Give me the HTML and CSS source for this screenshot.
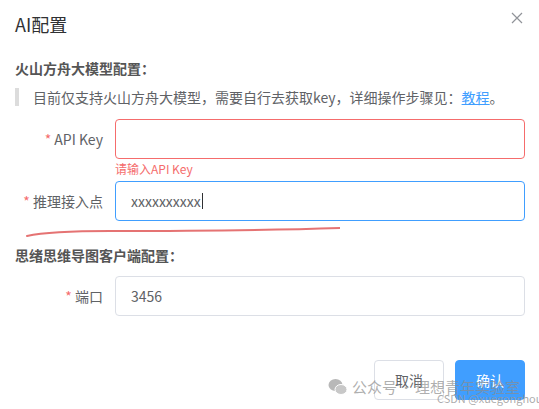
FILE: index.html
```html
<!DOCTYPE html>
<html lang="zh-CN">
<head>
<meta charset="utf-8">
<title>AI配置</title>
<link rel="stylesheet" href="styles.css">
</head>
<body>
<div class="dialog">
  <div class="header">
    <span class="title">AI配置</span>
    <button class="close" aria-label="关闭">
      <svg width="12" height="12" viewBox="0 0 12 12"><path d="M1 1L11 11M11 1L1 11" stroke="#909399" stroke-width="1.2" fill="none"/></svg>
    </button>
  </div>
  <div class="body">
    <div class="section-title">火山方舟大模型配置：</div>
    <div class="tip">目前仅支持火山方舟大模型，需要自行去获取key，详细操作步骤见：<a class="link" href="#">教程</a>。</div>
    <div class="row">
      <label class="label"><span class="star">*</span> API Key</label>
      <div class="field">
        <div class="input is-error"></div>
        <div class="error">请输入API Key</div>
      </div>
    </div>
    <div class="row">
      <label class="label"><span class="star">*</span> 推理接入点</label>
      <div class="field">
        <div class="input is-focus"><span class="value">xxxxxxxxxx</span><span class="caret"></span></div>
      </div>
    </div>
    <div class="section-title second">思绪思维导图客户端配置：</div>
    <div class="row">
      <label class="label"><span class="star">*</span> 端口</label>
      <div class="field">
        <div class="input"><span class="value">3456</span></div>
      </div>
    </div>
  </div>
  <div class="footer">
    <button class="btn">取消</button>
    <button class="btn primary">确认</button>
  </div>
</div>
<svg class="scribble" width="340" height="16" viewBox="0 0 340 16"><path d="M27 10 C 45 6, 70 5, 110 5 S 250 5, 340 2" stroke="#e57373" stroke-width="2" fill="none" stroke-linecap="round"/></svg>
<div class="watermark">
  <svg class="wechat" width="20" height="18" viewBox="0 0 20 18"><ellipse cx="7.5" cy="7" rx="7" ry="6" fill="#b8b8b8"/><ellipse cx="13" cy="11.5" rx="6" ry="5" fill="#c8c8c8" stroke="#fff" stroke-width="1"/></svg>
  <span>公众号<span class="dot">·</span>理想青年实验室</span>
</div>
<div class="csdn">CSDN @xuegonghou-薛</div>
</body>
</html>
```

FILE: styles.css
```css
* { box-sizing: border-box; }
html, body { margin: 0; padding: 0; background: #fff; }
body {
  width: 539px;
  height: 409px;
  overflow: hidden;
  position: relative;
  font-family: "Noto Sans CJK SC", "Noto Sans", sans-serif;
  color: #606266;
}
.dialog { padding: 0 14px 0 15px; }
.header {
  position: relative;
  padding-top: 12px;
  height: 56px;
}
.title {
  font-size: 18px;
  line-height: 24px;
  color: #303133;
}
.close {
  position: absolute;
  top: 12px;
  right: 2px;
  width: 12px;
  height: 12px;
  padding: 0;
  border: 0;
  background: none;
  display: block;
}
.close svg { display: block; }
.section-title {
  font-size: 14px;
  font-weight: bold;
  line-height: 24px;
  color: #555;
}
.section-title.second { margin-top: 19px; margin-bottom: 9px; }
.tip {
  margin-top: 8px;
  border-left: 4px solid #dcdcdc;
  padding-left: 14px;
  font-size: 14px;
  line-height: 18px;
  color: #606266;
  margin-bottom: 13px;
}
.link { color: #409eff; text-decoration: underline; }
.row {
  display: flex;
  margin-bottom: 22px;
}
.label {
  width: 100px;
  padding-right: 12px;
  text-align: right;
  font-size: 14px;
  line-height: 40px;
  color: #606266;
}
.star { color: #f56c6c; }
.field { flex: 1; position: relative; }
.input {
  height: 40px;
  border: 1px solid #dcdfe6;
  border-radius: 4px;
  padding: 0 15px;
  font-size: 14px;
  line-height: 38px;
  color: #606266;
  display: flex;
  align-items: center;
}
.input.is-error { border-color: #f56c6c; }
.input.is-focus { border-color: #409eff; }
.caret {
  display: inline-block;
  width: 1px;
  height: 16px;
  background: #303133;
  margin-left: 1px;
}
.error {
  position: absolute;
  top: 100%;
  left: 0;
  padding-top: 4px;
  font-size: 12px;
  line-height: 1;
  color: #f56c6c;
}
.footer {
  display: flex;
  justify-content: flex-end;
  gap: 11px;
  margin-top: 44px;
}
.btn {
  font-family: inherit;
  font-size: 14px;
  line-height: 14px;
  padding: 12px 20px;
  border: 1px solid #dcdfe6;
  border-radius: 4px;
  background: #fff;
  color: #606266;
}
.btn.primary {
  background: #409eff;
  border-color: #409eff;
  color: #fff;
}
.scribble {
  position: absolute;
  left: 0;
  top: 226px;
}
.watermark {
  position: absolute;
  left: 328px;
  top: 376px;
  display: flex;
  align-items: center;
  gap: 4px;
  font-size: 15px;
  line-height: 22px;
  color: rgba(140, 140, 140, 0.7);
  white-space: nowrap;
}
.dot { display: inline-block; width: 18px; text-align: center; font-family: "Noto Sans", sans-serif; font-weight: bold; }
.wechat { display: block; }
.csdn {
  position: absolute;
  left: 437px;
  top: 392px;
  font-size: 11px;
  line-height: 13px;
  color: rgba(150, 150, 150, 0.8);
  white-space: nowrap;
}
```
